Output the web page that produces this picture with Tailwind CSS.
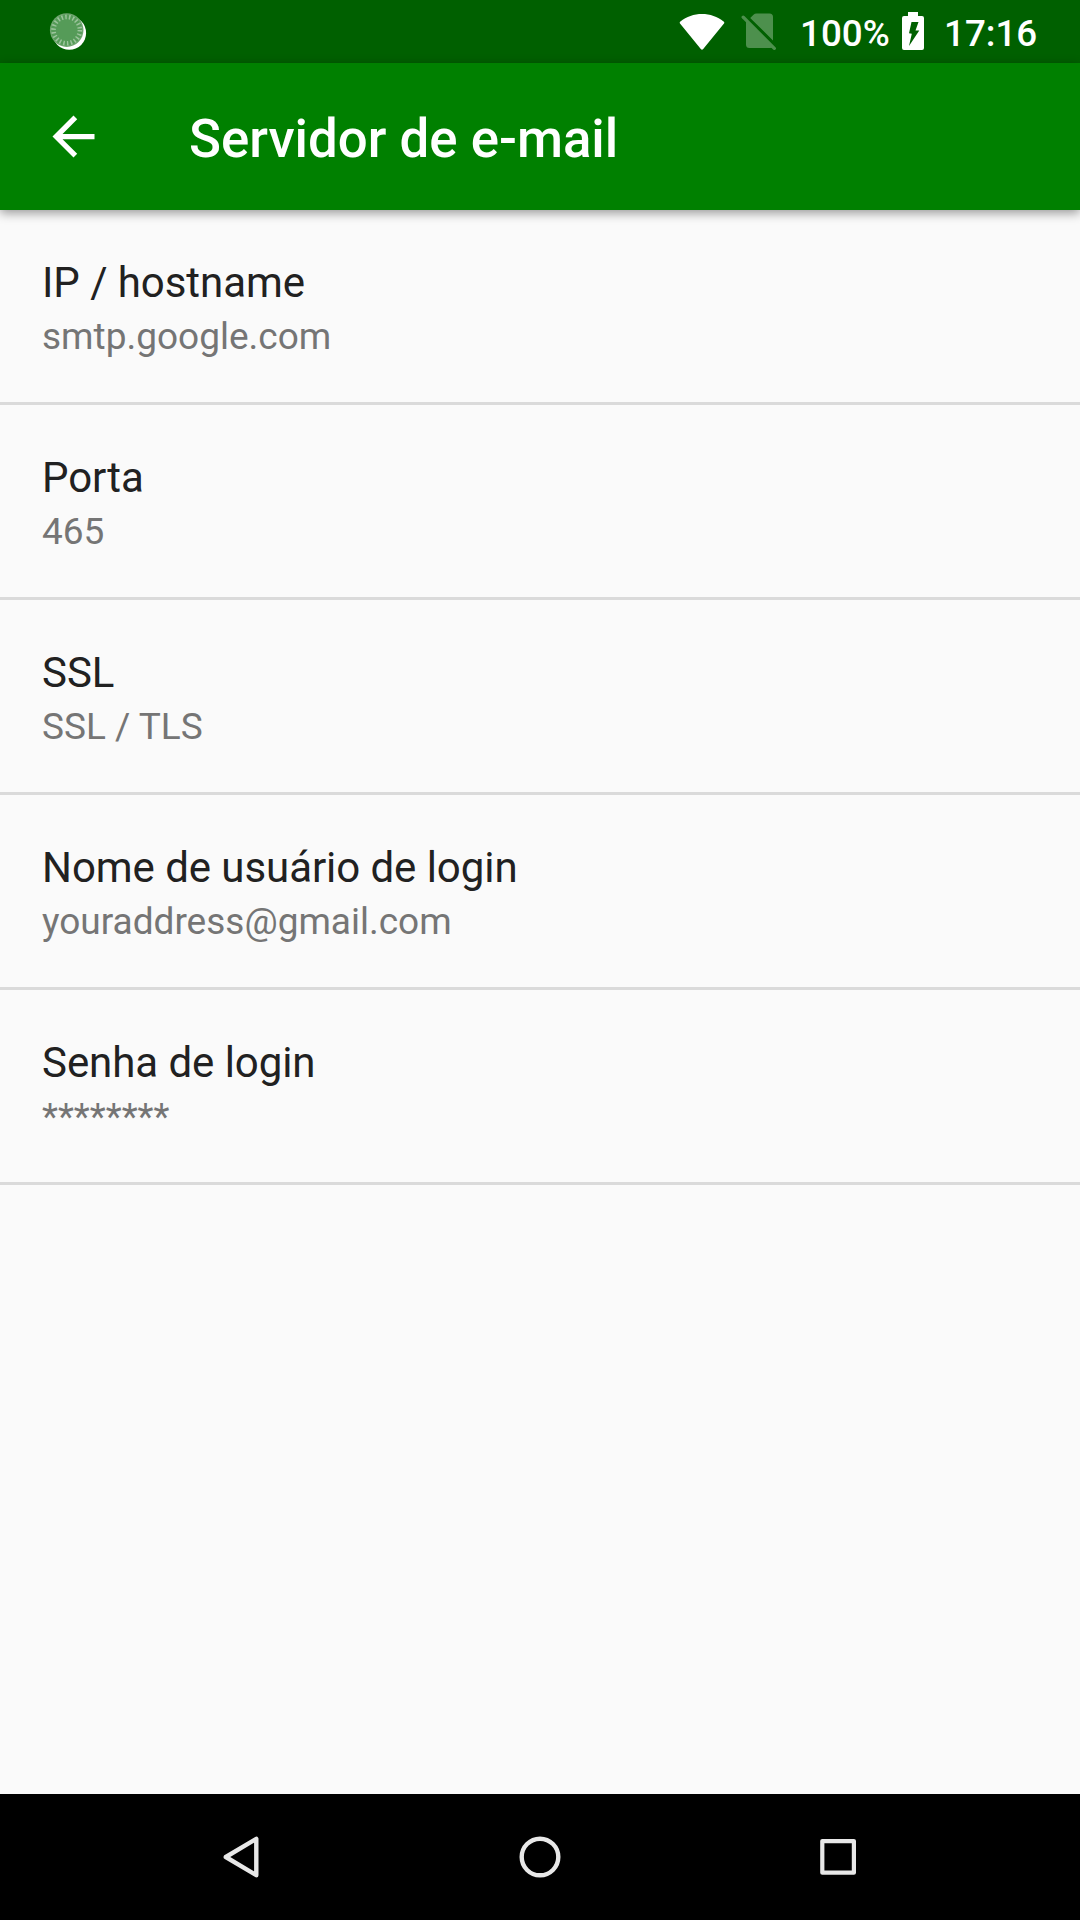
<!DOCTYPE html>
<html lang="pt">
<head>
    <meta charset="UTF-8">
    <meta name="viewport" content="width=device-width, initial-scale=1.0">
    <title>Servidor de e-mail</title>
    <script src="https://cdn.jsdelivr.net/npm/@tailwindcss/browser@4"></script>
</head>
<body class="bg-[#fafafa] font-['Roboto',sans-serif]">
    <div class="flex flex-col h-[1920px] w-[1080px] overflow-hidden">
        <!-- Status bar -->
        <div class="flex h-[63px] shrink-0 items-center bg-[#006000] pl-[48px] pr-[42px] text-white">
            <svg class="h-[42px] w-[42px]" viewBox="0 0 42 42">
                <circle cx="21.300" cy="22" r="16.800" fill="#fff"/>
                <circle cx="18.700" cy="19.100" r="16.800" fill="#6fa56f"/>
                <circle cx="18.700" cy="19.100" r="15.500" fill="#559b58"/>
                <circle cx="18.700" cy="19.100" r="13.200" fill="none" stroke="#9cc49c" stroke-width="4.600" stroke-dasharray="1.500 2.270"/>
            </svg>
            <svg class="ml-auto h-[36px] w-[46px]" viewBox="0 0 46 36">
                <path d="M1.2 9.8Q.1 8.6 1.4 7.6C7.5 2.6 15 0 23 0s15.500 2.600 21.600 7.600q1.300 1 .2 2.200L24.200 35.100q-1.200 1.400-2.400 0z" fill="#fff"/>
            </svg>
            <svg class="ml-[16px] h-[38px] w-[36px]" viewBox="0 0 36 38">
                <g fill="#fff" stroke="none" opacity=".3">
                    <path d="M12.500 1.700Q13.700.5 15.500.5H28.500Q32 .5 32 4V27.500L9.200 4.900zM5 7L32 34Q31 35 29 35H8.500Q5 35 5 31.500z"/>
                    <path d="M2.200 4.200L33.300 35.300" stroke="#fff" stroke-width="3.300" stroke-linecap="round"/>
                </g>
            </svg>
            <span class="ml-[23px] w-[88px] whitespace-nowrap pt-[5px] text-[36.75px] leading-[44px] font-medium">100%</span>
            <svg class="ml-[14px] mb-[1px] h-[38px] w-[22px]" viewBox="0 0 22 38">
                <path fill-rule="evenodd" d="M6 0h10v4h4q2 0 2 2v30q0 2-2 2H2q-2 0-2-2V6q0-2 2-2h4zM9.500 10L7 21.300L9.800 21.700L7 34L17.300 18.500H13.500L16.500 10z" fill="#fff"/>
            </svg>
            <span class="ml-[20px] w-[94px] whitespace-nowrap pt-[5px] text-[36.75px] leading-[44px] font-medium">17:16</span>
        </div>

        <!-- App bar -->
        <header class="z-10 flex h-[147px] shrink-0 items-center bg-[#008000] pl-[42px] text-white shadow-[0_3px_10px_rgba(0,0,0,0.4)]">
            <svg class="h-[63px] w-[63px]" viewBox="0 0 24 24" fill="currentColor">
                <path d="M20 11H7.830l5.590-5.590L12 4l-8 8 8 8 1.410-1.410L7.830 13H20v-2z"/>
            </svg>
            <h1 class="ml-[84px] pt-[5px] text-[52.8px] leading-[62px] font-medium">Servidor de e-mail</h1>
        </header>

        <!-- Settings list -->
        <main class="flex-1 text-[#212121]">
            <div class="h-[195px] border-b-3 border-[#dadada] px-[42px] pt-[45px]">
                <div class="text-[42px] leading-[56px] tracking-[-0.06px]">IP / hostname</div>
                <div class="text-[37px] leading-[52px] text-[#757575]">smtp.google.com</div>
            </div>
            <div class="h-[195px] border-b-3 border-[#dadada] px-[42px] pt-[45px]">
                <div class="text-[42px] leading-[56px] tracking-[-0.06px]">Porta</div>
                <div class="text-[37px] leading-[52px] text-[#757575]">465</div>
            </div>
            <div class="h-[195px] border-b-3 border-[#dadada] px-[42px] pt-[45px]">
                <div class="text-[42px] leading-[56px] tracking-[-0.06px]">SSL</div>
                <div class="text-[37px] leading-[52px] text-[#757575]">SSL / TLS</div>
            </div>
            <div class="h-[195px] border-b-3 border-[#dadada] px-[42px] pt-[45px]">
                <div class="text-[42px] leading-[56px] tracking-[-0.06px]">Nome de usuário de login</div>
                <div class="text-[37px] leading-[52px] text-[#757575]">youraddress@gmail.com</div>
            </div>
            <div class="h-[195px] border-b-3 border-[#dadada] px-[42px] pt-[45px]">
                <div class="text-[42px] leading-[56px] tracking-[-0.06px]">Senha de login</div>
                <div class="text-[37px] leading-[52px] text-[#757575]">********</div>
            </div>
        </main>

        <!-- Navigation bar -->
        <nav class="flex h-[126px] shrink-0 items-center justify-between bg-black px-[217px]">
            <svg class="h-[50px] w-[50px]" viewBox="0 0 50 50" fill="none" stroke="#e8e8e8" stroke-width="4.400" stroke-linejoin="round">
                <path d="M8.800 25L39.300 6.800V43.200z"/>
            </svg>
            <svg class="h-[50px] w-[50px]" viewBox="0 0 50 50" fill="none" stroke="#e8e8e8" stroke-width="4.400">
                <circle cx="25" cy="25" r="18.300"/>
            </svg>
            <svg class="h-[50px] w-[50px]" viewBox="0 0 50 50" fill="none" stroke="#e8e8e8" stroke-width="4.200" stroke-linejoin="round">
                <path d="M9.300 9.100H40.900V40.700H9.300z"/>
            </svg>
        </nav>
    </div>
</body>
</html>
